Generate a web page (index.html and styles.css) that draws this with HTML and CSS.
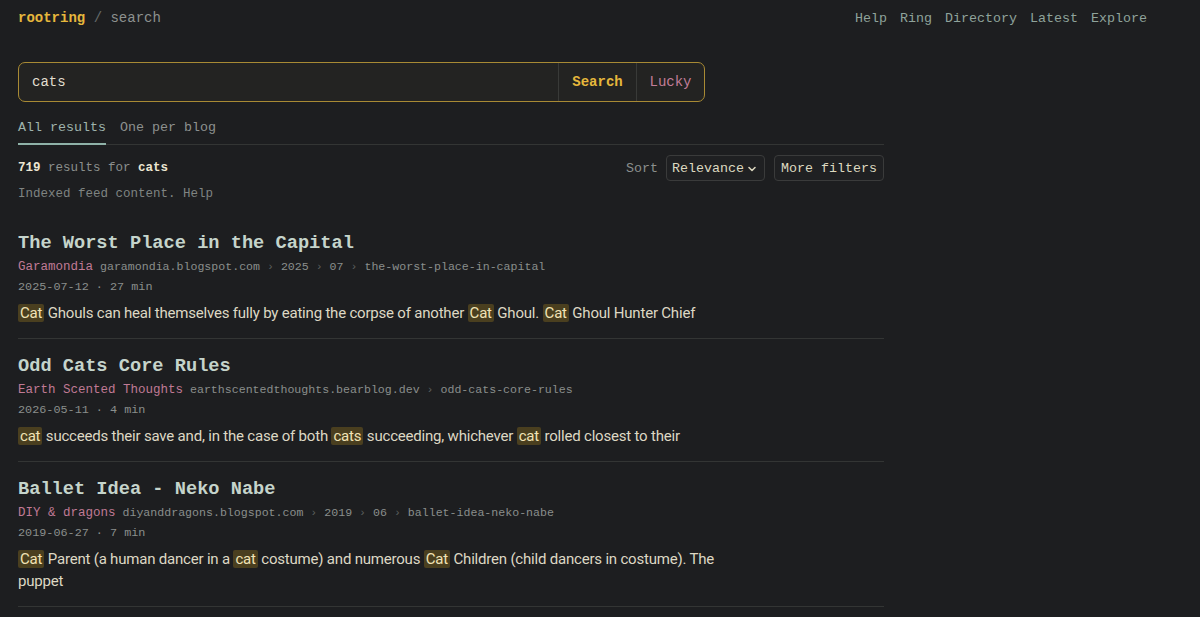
FILE: index.html
```html
<!DOCTYPE html>
<html lang="en">
<head>
<meta charset="utf-8">
<title>rootring / search</title>
<link rel="stylesheet" href="styles.css">
</head>
<body>
<header class="topbar">
  <div class="brand"><span class="logo">rootring</span> <span class="slash">/</span> <span class="crumb">search</span></div>
  <nav class="nav">
    <a href="#">Help</a>
    <a href="#">Ring</a>
    <a href="#">Directory</a>
    <a href="#">Latest</a>
    <a href="#">Explore</a>
  </nav>
</header>
<main class="main">
  <form class="searchbox">
    <input class="query" type="text" value="cats">
    <button class="btn btn-search" type="button">Search</button>
    <button class="btn btn-lucky" type="button">Lucky</button>
  </form>
  <div class="tabs">
    <a class="tab active" href="#">All results</a>
    <a class="tab" href="#">One per blog</a>
  </div>
  <div class="resultbar">
    <div class="count"><b>719</b> results for <b>cats</b></div>
    <div class="controls">
      <span class="sortlabel">Sort</span>
      <div class="select">Relevance <svg class="chev" width="10" height="10" viewBox="0 0 10 10"><path d="M2 3.5 L5 6.5 L8 3.5" fill="none" stroke="#d8d4bd" stroke-width="1.6" stroke-linecap="round" stroke-linejoin="round"/></svg></div>
      <div class="filters">More filters</div>
    </div>
  </div>
  <p class="note">Indexed feed content. Help</p>
  <ol class="results">
    <li class="result">
      <h2 class="title">The Worst Place in the Capital</h2>
      <div class="meta"><span class="site">Garamondia</span> <span class="url">garamondia.blogspot.com <span class="sep">›</span> 2025 <span class="sep">›</span> 07 <span class="sep">›</span> the-worst-place-in-capital</span></div>
      <div class="date">2025-07-12 · 27 min</div>
      <p class="snippet"><mark>Cat</mark> Ghouls can heal themselves fully by eating the corpse of another <mark>Cat</mark> Ghoul. <mark>Cat</mark> Ghoul Hunter Chief</p>
    </li>
    <li class="result">
      <h2 class="title">Odd Cats Core Rules</h2>
      <div class="meta"><span class="site">Earth Scented Thoughts</span> <span class="url">earthscentedthoughts.bearblog.dev <span class="sep">›</span> odd-cats-core-rules</span></div>
      <div class="date">2026-05-11 · 4 min</div>
      <p class="snippet"><mark>cat</mark> succeeds their save and, in the case of both <mark>cats</mark> succeeding, whichever <mark>cat</mark> rolled closest to their</p>
    </li>
    <li class="result">
      <h2 class="title">Ballet Idea - Neko Nabe</h2>
      <div class="meta"><span class="site">DIY &amp; dragons</span> <span class="url">diyanddragons.blogspot.com <span class="sep">›</span> 2019 <span class="sep">›</span> 06 <span class="sep">›</span> ballet-idea-neko-nabe</span></div>
      <div class="date">2019-06-27 · 7 min</div>
      <p class="snippet"><mark>Cat</mark> Parent (a human dancer in a <mark>cat</mark> costume) and numerous <mark>Cat</mark> Children (child dancers in costume). The puppet</p>
    </li>
  </ol>
</main>
</body>
</html>
```

FILE: styles.css
```css
* { box-sizing: border-box; }
html, body { margin: 0; padding: 0; }
body {
  background: #1d1e20;
  color: #d9d5c3;
  font-family: "Liberation Mono", "DejaVu Sans Mono", monospace;
  font-size: 13.33px;
  padding: 0 18px;
}
a { text-decoration: none; color: inherit; }

.topbar {
  height: 35px;
  padding-top: 1px;
  display: flex;
  align-items: center;
  justify-content: space-between;
  padding-right: 35px;
}
.brand { font-size: 14px; }
.logo { color: #e6b73c; font-weight: bold; }
.slash { color: #666a69; }
.crumb { color: #8d918f; }
.nav { display: flex; gap: 13px; font-size: 13.33px; }
.nav a { color: #8fa39b; }

.main { width: 866px; }

.searchbox {
  margin-top: 27px;
  width: 687px;
  height: 40px;
  display: flex;
  border: 1px solid #a88a34;
  border-radius: 7px;
  background: #232322;
  overflow: hidden;
}
.query {
  flex: 1;
  min-width: 0;
  background: transparent;
  border: 0;
  outline: none;
  color: #e2dfd0;
  font-family: inherit;
  font-size: 14px;
  padding: 0 13px;
}
.btn {
  background: transparent;
  border: 0;
  border-left: 1px solid #393a38;
  font-family: inherit;
  cursor: pointer;
}
.btn-search { width: 78px; color: #e6b73c; font-weight: bold; font-size: 14px; }
.btn-lucky { width: 68px; color: #c27d98; font-size: 14px; }

.tabs {
  margin-top: 16px;
  display: flex;
  gap: 14px;
  border-bottom: 1px solid #333534;
}
.tab {
  color: #8d918f;
  line-height: 20px;
  padding-bottom: 5px;
  border-bottom: 2px solid transparent;
  margin-bottom: -1px;
}
.tab.active { color: #9fb3ac; border-bottom-color: #8fb2a8; }

.resultbar {
  margin-top: 10px;
  display: flex;
  justify-content: space-between;
  align-items: center;
  height: 26px;
}
.count { font-size: 12.5px; color: #8b8f8d; }
.count b { color: #ece6d2; }
.controls { display: flex; align-items: center; gap: 9px; }
.sortlabel { color: #8b8f8d; margin-right: -1px; }
.select, .filters {
  height: 26px;
  display: flex;
  align-items: center;
  border: 1px solid #3a3b3b;
  border-radius: 4px;
  background: #1f2022;
  color: #ddd9c0;
  white-space: nowrap;
}
.select { width: 99px; justify-content: space-between; padding: 0 7px 0 5px; }
.chev { margin-top: 1px; }
.filters { padding: 0 6px; }

.note {
  margin: 3px 0 0;
  font-size: 12.5px;
  line-height: 20px;
  color: #7f8482;
}

.results {
  list-style: none;
  margin: 12px 0 0;
  padding: 0;
}
.result {
  padding: 14px 0 14px;
  border-bottom: 1px solid #333534;
}
.title {
  margin: 0;
  font-size: 18.67px;
  line-height: 26px;
  font-weight: bold;
  color: #c5d4cb;
}
.meta {
  margin-top: 1px;
  font-size: 11.6px;
  line-height: 20px;
  color: #8a8e8c;
}
.site { color: #c07a95; font-size: 12.5px; }
.sep { color: #5b5f5d; }
.date {
  font-size: 11.8px;
  line-height: 20px;
  color: #8a8e8c;
}
.snippet {
  margin: 5px 0 0;
  width: 720px;
  font-family: Roboto, "Liberation Sans", sans-serif;
  font-size: 15px;
  letter-spacing: -0.2px;
  line-height: 22px;
  color: #ddd8c4;
}
mark {
  background: #4a3f1f;
  color: #f1e3b6;
  padding: 0 2px;
  border-radius: 2px;
}
```
